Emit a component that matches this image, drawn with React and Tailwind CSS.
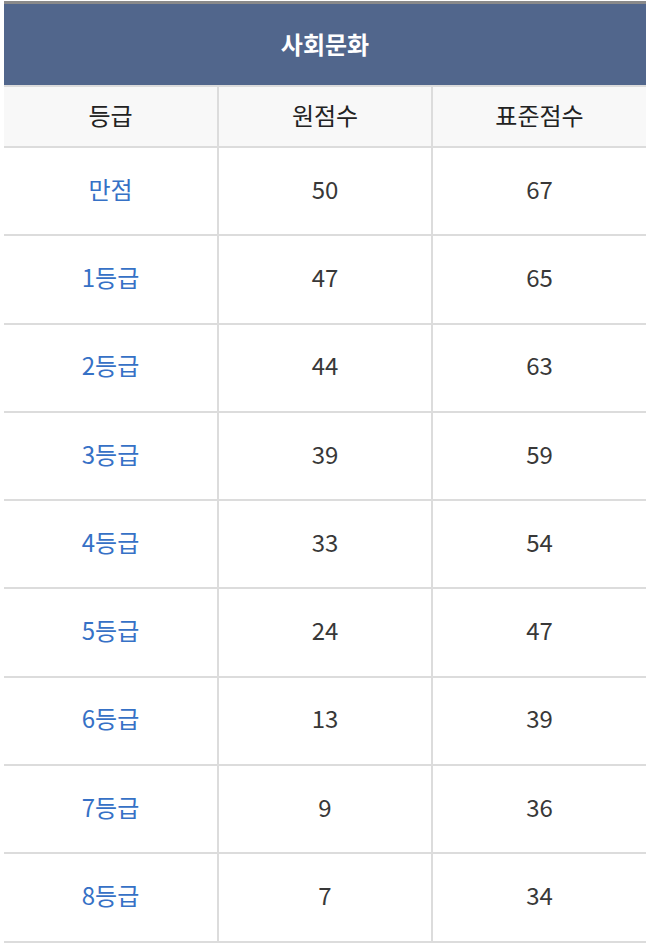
import React from "react";

const ROWS = [
  ["만점", "50", "67"],
  ["1등급", "47", "65"],
  ["2등급", "44", "63"],
  ["3등급", "39", "59"],
  ["4등급", "33", "54"],
  ["5등급", "24", "47"],
  ["6등급", "13", "39"],
  ["7등급", "9", "36"],
  ["8등급", "7", "34"],
];

const font = { fontFamily: '"Noto Sans CJK KR", "Noto Sans", sans-serif' };

export default function App() {
  return (
    <div className="bg-white min-h-[950px] pt-[1px] pl-[4px]" style={font}>
      <div className="w-[642px] border-t-[3px] border-[#8a8a8a]">
        {/* title */}
        <div className="h-[81px] bg-[#51668c] flex items-center justify-center pb-[2px] text-white font-bold text-[24px]">
          사회문화
        </div>

        {/* column headers */}
        <div className="grid grid-cols-[215px_214px_213px] border-t-2 border-b-2 border-[#dcdcdc] bg-[#f8f8f8] text-[#222] text-[24px]">
          <div className="h-[59px] flex items-center justify-center pb-[3px] border-r-2 border-[#dcdcdc]">등급</div>
          <div className="h-[59px] flex items-center justify-center pb-[3px] border-r-2 border-[#dcdcdc]">원점수</div>
          <div className="h-[59px] flex items-center justify-center pb-[3px]">표준점수</div>
        </div>

        {/* data rows */}
        {ROWS.map((r) => (
          <div key={r[0]} className="grid grid-cols-[215px_214px_213px] border-b-2 border-[#dcdcdc] text-[24px]">
            <div className="h-[86.3px] flex items-center justify-center pb-[5px] border-r-2 border-[#dcdcdc] text-[#3671c6]">{r[0]}</div>
            <div className="h-[86.3px] flex items-center justify-center pb-[5px] border-r-2 border-[#dcdcdc] text-[#383838]">{r[1]}</div>
            <div className="h-[86.3px] flex items-center justify-center pb-[5px] text-[#383838]">{r[2]}</div>
          </div>
        ))}
      </div>
    </div>
  );
}
